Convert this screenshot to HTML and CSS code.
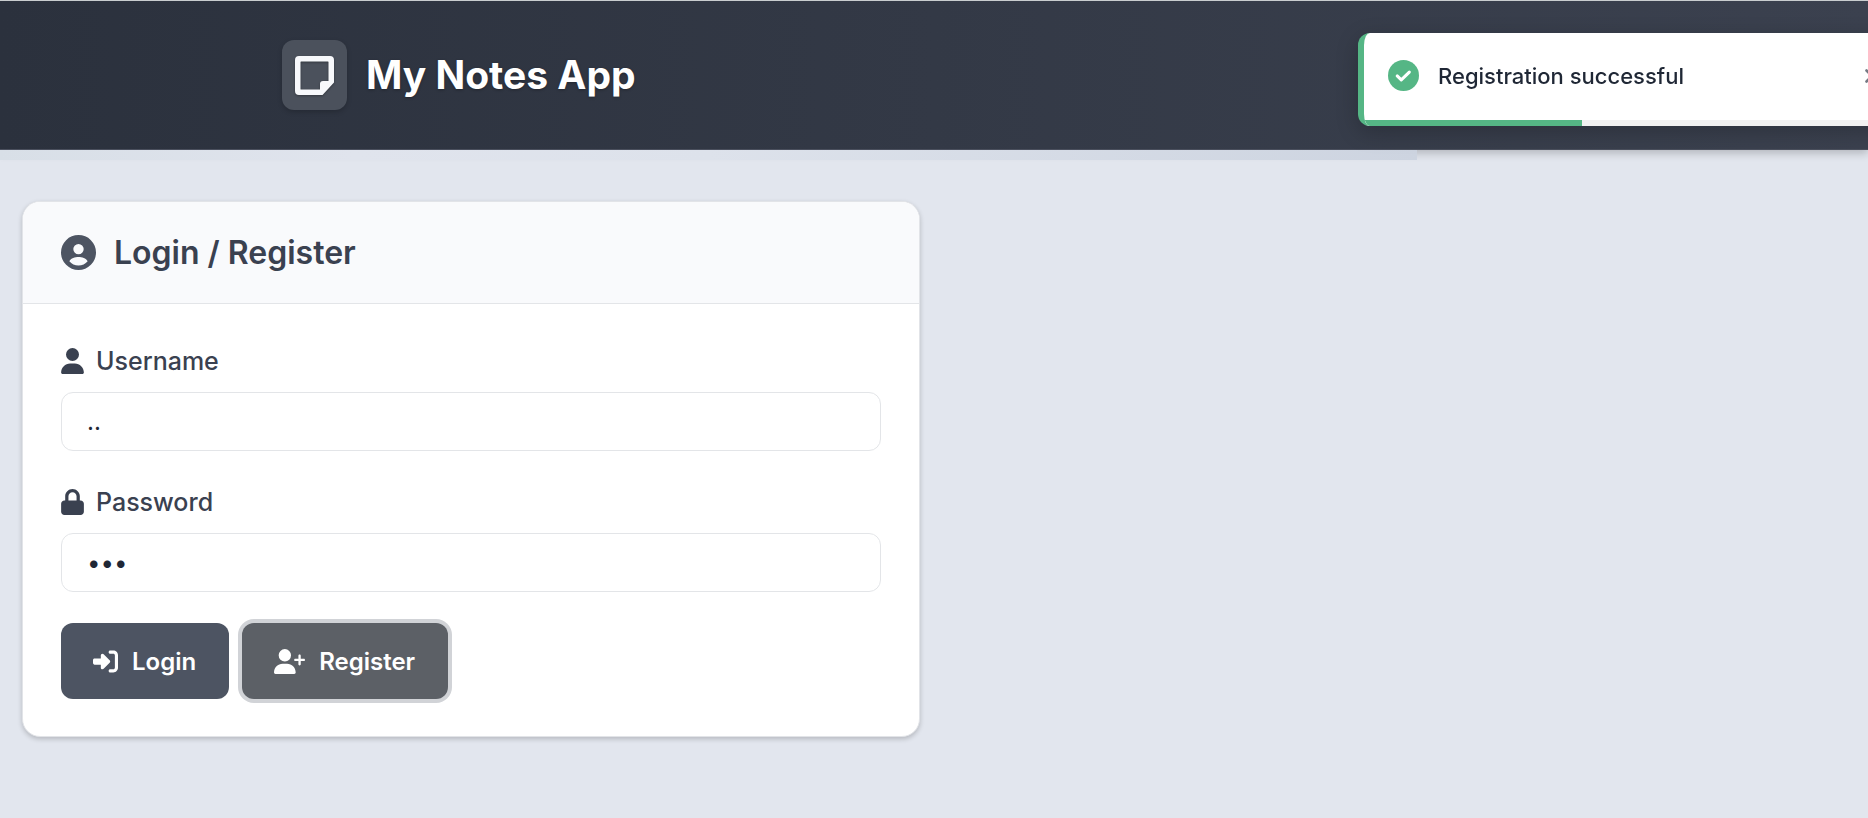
FILE: index.html
```html
<!DOCTYPE html>
<html lang="en">
<head>
<meta charset="utf-8">
<meta name="viewport" content="width=device-width, initial-scale=1">
<title>My Notes App</title>
<link rel="stylesheet" href="styles.css">
</head>
<body>
<header class="site-header">
  <div class="header-inner">
    <span class="logo">
      <svg class="logo-icon" viewBox="0 0 39 39" aria-hidden="true"><path fill="currentColor" fill-rule="evenodd" d="M4 0H35Q39 0 39 4V26.500L27.500 39H4Q0 39 0 35V4Q0 0 4 0ZM6 5.500Q5.500 5.500 5.500 6V33Q5.500 33.500 6 33.500H25V28Q25 25 28 25H33.500V6Q33.500 5.500 33 5.500Z"/></svg>
    </span>
    <h1 class="site-title">My Notes App</h1>
  </div>
</header>
<div class="strip"></div>

<main class="page">
  <section class="card">
    <div class="card-header">
      <svg class="card-icon" viewBox="0 0 512 512" aria-hidden="true"><path fill="currentColor" fill-rule="evenodd" d="M256 0a256 256 0 1 0 0 512a256 256 0 1 0 0-512ZM256 130a76 76 0 1 1 0 152a76 76 0 1 1 0-152ZM122 384C145 338 205 322 256 322S367 338 390 384C358 426 309 446 256 446S154 426 122 384Z"/></svg>
      <h2 class="card-title">Login / Register</h2>
    </div>
    <form class="card-body">
      <div class="field">
        <label class="label" for="username">
          <svg class="label-icon" viewBox="0 0 448 512" aria-hidden="true"><path fill="currentColor" d="M224 256a128 128 0 1 0 0-256a128 128 0 1 0 0 256zm-45.700 48C79.800 304 0 383.800 0 482.300C0 498.700 13.300 512 29.700 512h388.600c16.400 0 29.700-13.300 29.700-29.700C448 383.800 368.200 304 269.700 304h-91.400z"/></svg>
          Username
        </label>
        <input class="input" id="username" type="text" value="..">
      </div>
      <div class="field">
        <label class="label" for="password">
          <svg class="label-icon" viewBox="0 0 448 512" aria-hidden="true"><path fill="currentColor" d="M144 144v80h160v-80c0-44.200-35.800-80-80-80s-80 35.800-80 80zm-64 80v-80C80 64.500 144.500 0 224 0s144 64.500 144 144v80h16c35.300 0 64 28.700 64 64v160c0 35.300-28.700 64-64 64H64c-35.300 0-64-28.700-64-64V288c0-35.300 28.700-64 64-64h16z"/></svg>
          Password
        </label>
        <input class="input" id="password" type="password" value="abc">
      </div>
      <div class="actions">
        <button class="btn btn-primary" type="button">
          <svg class="btn-icon" viewBox="0 0 512 512" aria-hidden="true"><path fill="currentColor" d="M217.900 105.900L340.700 228.700c7.200 7.200 11.300 17.100 11.300 27.300s-4.100 20.100-11.300 27.300L217.900 406.100c-6.400 6.400-15 9.900-24 9.900c-18.700 0-33.900-15.200-33.900-33.900V320H32c-17.700 0-32-14.300-32-32v-64c0-17.700 14.300-32 32-32h128v-62.100c0-18.700 15.200-33.900 33.900-33.900c9 0 17.600 3.600 24 9.900zM352 416h64c17.700 0 32-14.300 32-32V128c0-17.700-14.300-32-32-32h-64c-17.700 0-32-14.300-32-32s14.300-32 32-32h64c53 0 96 43 96 96v256c0 53-43 96-96 96h-64c-17.700 0-32-14.300-32-32s14.300-32 32-32z"/></svg>
          Login
        </button>
        <button class="btn btn-secondary" type="button">
          <svg class="btn-icon btn-icon-wide" viewBox="0 0 640 512" aria-hidden="true"><path fill="currentColor" d="M96 128a128 128 0 1 1 256 0a128 128 0 1 1-256 0zM0 482.300C0 383.800 79.800 304 178.300 304h91.400C368.200 304 448 383.800 448 482.300c0 16.400-13.300 29.700-29.700 29.700H29.700C13.300 512 0 498.700 0 482.300zM504 312v-64h-64c-13.300 0-24-10.700-24-24s10.700-24 24-24h64v-64c0-13.300 10.700-24 24-24s24 10.700 24 24v64h64c13.300 0 24 10.700 24 24s-10.700 24-24 24h-64v64c0 13.300-10.700 24-24 24s-24-10.700-24-24z"/></svg>
          Register
        </button>
      </div>
    </form>
  </section>
</main>

<div class="toast" role="status">
  <div class="toast-body">
    <svg class="toast-icon" viewBox="0 0 32 32" aria-hidden="true"><circle cx="16" cy="16" r="16" fill="currentColor"/><path d="M9.500 16.500L13.700 20.500L22 12.500" fill="none" stroke="#fff" stroke-width="3.200" stroke-linecap="round" stroke-linejoin="round"/></svg>
    <span class="toast-text">Registration successful</span>
    <button class="toast-close" type="button" aria-label="Close"><svg class="close-icon" viewBox="0 0 14 14" aria-hidden="true"><path d="M1.500 1.500L12.500 12.500M12.500 1.500L1.500 12.500" stroke="currentColor" stroke-width="2.600" stroke-linecap="round"/></svg></button>
  </div>
  <div class="toast-track"><div class="toast-progress"></div></div>
</div>
</body>
</html>
```
FILE: styles.css
```css
* { box-sizing: border-box; }

body {
  margin: 0;
  min-height: 100vh;
  overflow-x: hidden;
  background: #e2e6ee;
  color: #1f2735;
  font-family: Inter, "Liberation Sans", sans-serif;
}

h1, h2 { margin: 0; }
svg { display: block; flex: none; }

.site-header {
  padding: 39px 0;
  border-top: 1px solid #c9cdcf;
  border-bottom: 1px solid #4a4f5d;
  background: linear-gradient(90deg, #2b313d, #3b414f);
  box-shadow: 0 4px 8px rgba(0, 0, 0, 0.18);
}

.header-inner {
  display: flex;
  align-items: center;
  gap: 19px;
  max-width: 1304px;
  margin: 0 auto;
}

.logo {
  display: flex;
  align-items: center;
  justify-content: center;
  width: 65px;
  height: 70px;
  border-radius: 12px;
  background: #4b515c;
  box-shadow: 0 2px 5px rgba(0, 0, 0, 0.2);
  color: #f8f9fc;
}

.logo-icon {
  width: 39px;
  height: 39px;
  filter: drop-shadow(0 1px 1px rgba(0, 0, 0, 0.3));
}

.site-title {
  color: #fff;
  font-size: 39px;
  font-weight: 700;
  line-height: 48px;
  text-shadow: 0 1px 3px rgba(0, 0, 0, 0.3);
}

.strip {
  position: relative;
  width: 1417px;
  max-width: 100%;
  height: 10px;
  background: linear-gradient(90deg, #d8dfe7, #e0e4ed 25%, #dde2eb 50%, #cdd4e0);
}

.page { padding: 41px 22px 80px; }

.card {
  max-width: 898px;
  overflow: hidden;
  border: 1px solid #e2e4e8;
  border-radius: 18px;
  background: #fff;
  box-shadow: 0 2px 5px rgba(0, 0, 0, 0.2);
}

.card-header {
  display: flex;
  align-items: center;
  gap: 18px;
  padding: 28px 38px;
  border-bottom: 1px solid #e3e5e8;
  background: #f9fafc;
}

.card-icon {
  width: 35px;
  height: 35px;
  color: #4d5462;
}

.card-title {
  color: #3a4150;
  font-size: 32px;
  font-weight: 600;
  line-height: 45px;
}

.card-body {
  display: flex;
  flex-direction: column;
  gap: 31px;
  padding: 37px 38px;
}

.field {
  display: flex;
  flex-direction: column;
  gap: 11px;
}

.label {
  display: flex;
  align-items: center;
  gap: 12px;
  color: #3a4150;
  font-size: 25px;
  font-weight: 500;
  line-height: 40px;
}

.label-icon {
  width: 23px;
  height: 26px;
}

.input {
  width: 100%;
  height: 59px;
  padding: 0 25px;
  border: 1px solid #e3e5e8;
  border-radius: 12px;
  background: #fff;
  color: #1f2735;
  font-family: inherit;
  font-size: 24px;
}

.actions {
  display: flex;
  gap: 13px;
}

.btn {
  display: flex;
  align-items: center;
  gap: 14px;
  height: 76px;
  padding: 0 33px 0 32px;
  border: 0;
  border-radius: 12px;
  color: #fff;
  font-family: inherit;
  font-size: 24px;
  font-weight: 600;
}

.btn-primary { background: #4d5462; }

.btn-secondary {
  background: #5c6066;
  box-shadow: 0 0 0 4px #d1d3d7;
}

.btn-icon {
  width: 25px;
  height: 25px;
}

.btn-icon-wide { width: 31px; }

.toast {
  position: fixed;
  top: 33px;
  right: -41px;
  width: 551px;
  overflow: hidden;
  border-left: 6px solid #55b685;
  border-radius: 12px;
  background: #fff;
  box-shadow: 0 6px 22px rgba(0, 0, 0, 0.22);
}

.toast-body {
  display: flex;
  align-items: center;
  gap: 19px;
  height: 87px;
  padding: 0 30px 2px 24px;
}

.toast-icon {
  width: 31px;
  height: 31px;
  color: #55b685;
}

.toast-text {
  flex: 1;
  font-size: 22px;
  font-weight: 500;
}

.toast-close {
  padding: 0;
  border: 0;
  background: none;
  color: #747983;
}

.close-icon {
  width: 14px;
  height: 14px;
}

.toast-track {
  height: 6px;
  background: #f1f1f1;
}

.toast-progress {
  width: 40%;
  height: 6px;
  background: #55b685;
}
```
